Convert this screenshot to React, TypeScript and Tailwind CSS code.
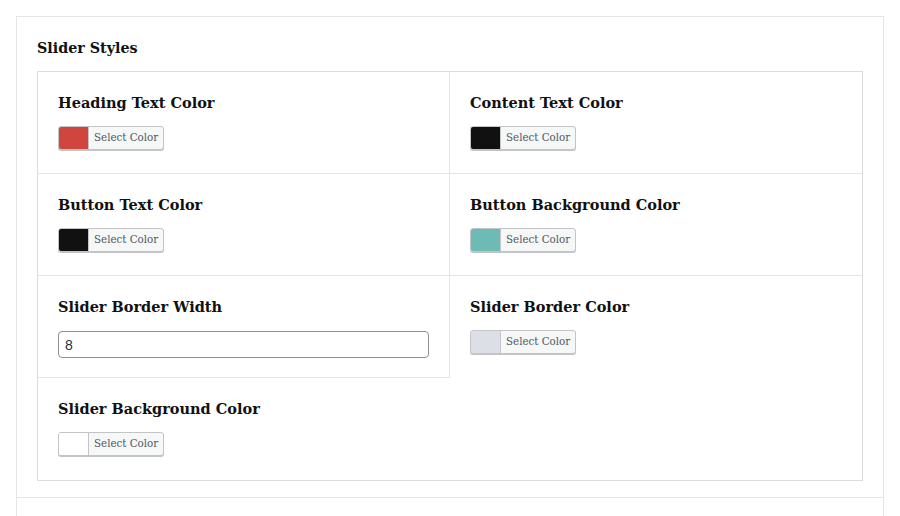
const serif = "font-['DejaVu_Serif','Liberation_Serif',serif]";

function ColorButton({ color }: { color: string }) {
  return (
    <button
      type="button"
      className="flex h-[24px] items-stretch overflow-hidden rounded-[3px] border border-[#c3c4c7] bg-[#f6f7f7] shadow-[0_1px_0_#c3c4c7]"
    >
      <span className="w-[30px] border-r border-[#c3c4c7]" style={{ background: color }} />
      <span className={`${serif} flex items-center px-[5px] text-[10.3px] text-[#50575e]`}>Select Color</span>
    </button>
  );
}

function Cell({ label, children, className = '' }: { label: string; children: React.ReactNode; className?: string }) {
  return (
    <div className={`h-[102px] px-[20px] pt-[20px] ${className}`}>
      <h3 className={`${serif} mb-[12px] text-[14.5px] font-bold leading-[22px] text-[#111]`}>{label}</h3>
      {children}
    </div>
  );
}

export default function App() {
  return (
    <div className="min-h-[516px] bg-white p-[16px] pb-0">
      <div className="border border-b-0 border-[#e5e5e5] bg-white">
        <div className="px-[20px] pb-[16px] pt-[20px]">
          <h2 className={`${serif} mb-[12px] text-[14.3px] font-bold leading-[22px] text-[#111]`}>Slider Styles</h2>
          <div className="grid grid-cols-2 border border-[#dcdcde]">
            <Cell label="Heading Text Color" className="border-b border-r border-[#e5e5e5]">
              <ColorButton color="#d0463e" />
            </Cell>
            <Cell label="Content Text Color" className="border-b border-[#e5e5e5]">
              <ColorButton color="#111111" />
            </Cell>
            <Cell label="Button Text Color" className="border-b border-r border-[#e5e5e5]">
              <ColorButton color="#111111" />
            </Cell>
            <Cell label="Button Background Color" className="border-b border-[#e5e5e5]">
              <ColorButton color="#6cbcb5" />
            </Cell>
            <Cell label="Slider Border Width" className="border-b border-r border-[#e5e5e5]">
              <input
                type="text"
                defaultValue="8"
                className="mt-[1px] h-[27px] w-full rounded-[4px] border border-[#8c8f94] px-[6px] font-['Liberation_Sans',sans-serif] text-[14px] text-[#2c3338] outline-none"
              />
            </Cell>
            <Cell label="Slider Border Color">
              <ColorButton color="#dcdfe5" />
            </Cell>
            <Cell label="Slider Background Color">
              <ColorButton color="#ffffff" />
            </Cell>
            <div />
          </div>
        </div>
        <div className="h-[20px] border-t border-[#e5e5e5]" />
      </div>
    </div>
  );
}
